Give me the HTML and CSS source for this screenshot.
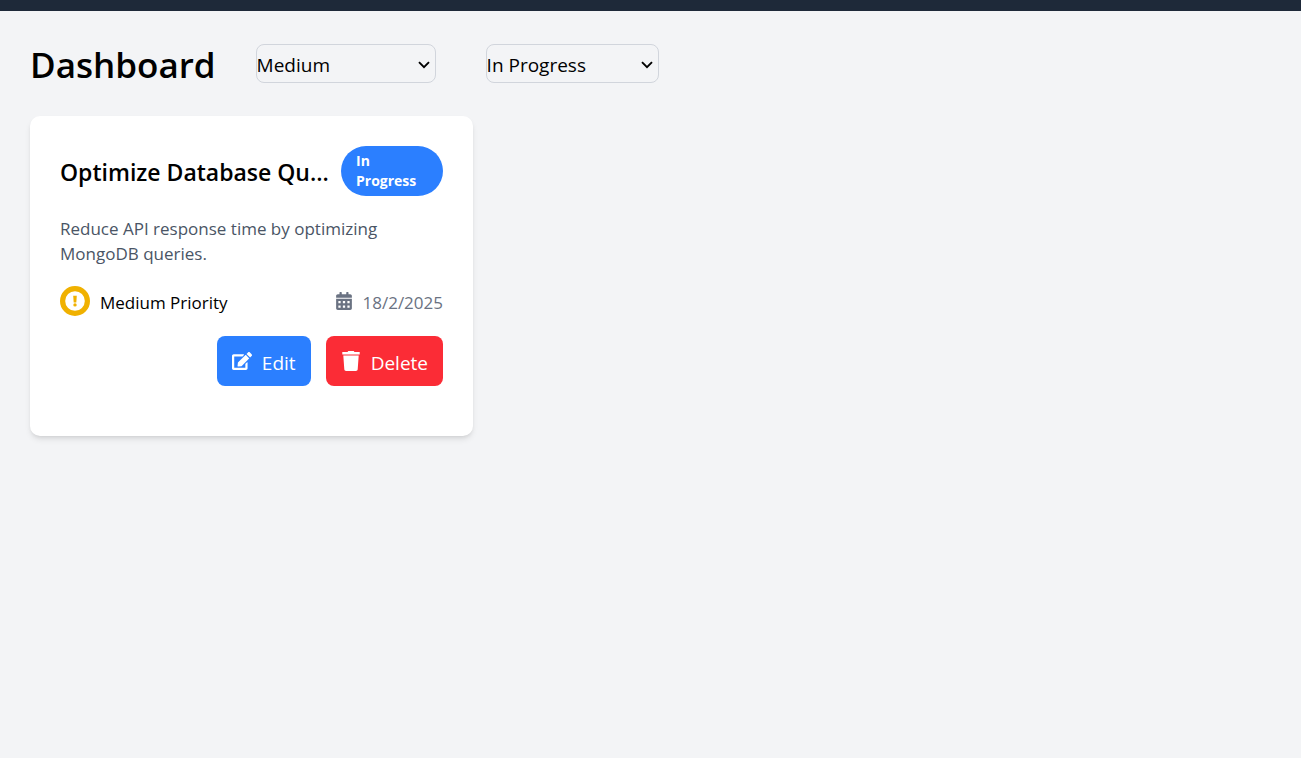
FILE: index.html
```html
<!DOCTYPE html>
<html lang="en">
<head>
<meta charset="utf-8">
<title>Dashboard</title>
<link rel="stylesheet" href="styles.css">
</head>
<body>
<header class="topbar"></header>
<main class="page">
  <div class="toolbar">
    <h1 class="page-title">Dashboard</h1>
    <div class="filters">
      <div class="filter filter-priority">
        <select class="filter-select" aria-label="Priority">
          <option>Low</option>
          <option selected>Medium</option>
          <option>High</option>
        </select>
        <svg class="chevron" viewBox="0 0 12 8" aria-hidden="true"><path d="M1 1.200l5 5 5-5" fill="none" stroke="currentColor" stroke-width="1.900"/></svg>
      </div>
      <div class="filter filter-status">
        <select class="filter-select" aria-label="Status">
          <option>To Do</option>
          <option selected>In Progress</option>
          <option>Completed</option>
        </select>
        <svg class="chevron" viewBox="0 0 12 8" aria-hidden="true"><path d="M1 1.200l5 5 5-5" fill="none" stroke="currentColor" stroke-width="1.900"/></svg>
      </div>
    </div>
  </div>
  <section class="task-grid">
    <article class="card">
      <div class="card-head">
        <h2 class="card-title">Optimize Database Queries</h2>
        <span class="badge">In Progress</span>
      </div>
      <p class="card-text">Reduce API response time by optimizing MongoDB queries.</p>
      <div class="meta">
        <div class="priority">
          <svg class="icon-priority" viewBox="0 0 30 30" aria-hidden="true">
            <circle cx="15" cy="15" r="12.4" fill="none" stroke="currentColor" stroke-width="5.2"/>
            <path d="M13.2 9.8h3.600l-.5 6.600h-2.600z" fill="currentColor"/>
            <circle cx="15" cy="18.9" r="1.7" fill="currentColor"/>
          </svg>
          <span class="label">Medium Priority</span>
        </div>
        <div class="date">
          <svg class="icon-date" viewBox="0 0 448 512" aria-hidden="true">
            <path fill="currentColor" fill-rule="evenodd" d="M0 464c0 26.500 21.500 48 48 48h352c26.500 0 48-21.500 48-48V192H0zM64 256h64v64H64zM192 256h64v64h-64zM320 256h64v64h-64zM64 384h64v64H64zM192 384h64v64h-64zM320 384h64v64h-64zM400 64h-48V16c0-8.800-7.200-16-16-16h-32c-8.800 0-16 7.200-16 16v48H160V16c0-8.800-7.200-16-16-16h-32c-8.800 0-16 7.200-16 16v48H48C21.500 64 0 85.500 0 112v48h448v-48c0-26.500-21.500-48-48-48z"/>
          </svg>
          <time class="label" datetime="2025-02-18">18/2/2025</time>
        </div>
      </div>
      <div class="actions">
        <button class="btn btn-edit" type="button">
          <svg class="icon-edit" viewBox="0 0 576 512" aria-hidden="true">
            <path fill="currentColor" d="M402.600 83.200l90.200 90.200c3.800 3.800 3.800 10 0 13.800L274.400 405.600l-92.800 10.300c-12.400 1.400-22.900-9.100-21.500-21.500l10.300-92.800L388.800 83.200c3.800-3.800 10-3.800 13.800 0zm162-22.900l-48.800-48.800c-15.200-15.200-39.900-15.200-55.200 0l-35.400 35.400c-3.800 3.800-3.800 10 0 13.800l90.200 90.200c3.800 3.800 10 3.800 13.800 0l35.400-35.400c15.200-15.300 15.200-40 0-55.200zM384 346.200V448H64V128h229.800c3.200 0 6.200-1.300 8.500-3.500l40-40c7.600-7.600 2.200-20.500-8.500-20.500H48C21.500 64 0 85.500 0 112v352c0 26.500 21.500 48 48 48h352c26.500 0 48-21.500 48-48V306.200c0-10.700-12.900-16-20.500-8.500l-40 40c-2.200 2.300-3.500 5.300-3.500 8.500z"/>
          </svg>
          <span class="label">Edit</span>
        </button>
        <button class="btn btn-delete" type="button">
          <svg class="icon-trash" viewBox="0 0 20 20" aria-hidden="true">
            <path fill="currentColor" d="M7.300 0h5.400l.8 1H18.700v2.500H1.300V1h5.200zM2.300 4.500h15.400l-1 13.800c-.1 1-.8 1.700-1.800 1.700H5.100c-1 0-1.700-.7-1.800-1.700z"/>
          </svg>
          <span class="label">Delete</span>
        </button>
      </div>
    </article>
  </section>
</main>
</body>
</html>
```
FILE: styles.css
```css
* {
  box-sizing: border-box;
}

body {
  margin: 0;
  min-height: 100vh;
  background: #f3f4f6;
  color: #000;
  font-family: "Open Sans", "Noto Sans", sans-serif;
  font-size: 19px;
}

h1, h2, p {
  margin: 0;
}

.topbar {
  height: 11px;
  background: #1e2939;
}

.page {
  padding: 30px;
}

.toolbar {
  display: flex;
  align-items: center;
  gap: 40px;
  margin-bottom: 30px;
}

.page-title {
  padding-top: 3px;
  font-size: 35px;
  line-height: 42px;
  font-weight: 600;
}

.filters {
  display: flex;
  gap: 50px;
}

.filter {
  position: relative;
}

.filter-priority {
  width: 180px;
}

.filter-status {
  width: 173px;
}

.filter-select {
  display: block;
  width: 100%;
  height: 39px;
  padding: 2px 20px 0 0;
  border: 1px solid #d1d5dc;
  border-radius: 8px;
  background: transparent;
  color: inherit;
  font: inherit;
  appearance: none;
}

.chevron {
  position: absolute;
  top: 17px;
  right: 6px;
  width: 12px;
  height: 8px;
  pointer-events: none;
}

.task-grid {
  display: grid;
  grid-template-columns: repeat(auto-fill, minmax(min(100%, 420px), 443px));
  gap: 30px;
}

.card {
  padding: 30px 30px 50px;
  border-radius: 10px;
  background: #fff;
  box-shadow: 0 4px 6px -1px rgba(0, 0, 0, 0.1), 0 2px 4px -2px rgba(0, 0, 0, 0.1);
}

.card-head {
  display: flex;
  align-items: center;
  justify-content: space-between;
  gap: 5px;
  margin-bottom: 20px;
}

.card-title {
  min-width: 0;
  padding-top: 2px;
  overflow: hidden;
  text-overflow: ellipsis;
  white-space: nowrap;
  font-size: 23px;
  line-height: 35px;
  font-weight: 600;
}

.badge {
  flex: 0 0 102px;
  padding: 5px 15px;
  border-radius: 25px;
  background: #2b7fff;
  color: #fff;
  font-size: 14px;
  line-height: 20px;
  font-weight: 700;
}

.card-text {
  margin-bottom: 20px;
  color: #4a5565;
  font-size: 17px;
  line-height: 25px;
}

.meta {
  display: flex;
  align-items: center;
  justify-content: space-between;
  margin-bottom: 20px;
  font-size: 17px;
  line-height: 25px;
}

.priority, .date {
  display: flex;
  align-items: center;
  gap: 10px;
}

.date {
  color: #6a7282;
}

.label {
  padding-top: 3px;
}

.icon-priority {
  width: 30px;
  height: 30px;
  color: #f0b100;
}

.icon-date {
  width: 16px;
  height: 18px;
}

.actions {
  display: flex;
  justify-content: flex-end;
  gap: 15px;
}

.btn {
  display: flex;
  align-items: center;
  gap: 10px;
  height: 50px;
  padding: 0 15px;
  border: 0;
  border-radius: 8px;
  color: #fff;
  font: inherit;
}

.btn-edit {
  background: #2b7fff;
}

.btn-delete {
  background: #fb2c36;
}

.icon-edit, .icon-trash {
  width: 20px;
  height: 20px;
}
```
